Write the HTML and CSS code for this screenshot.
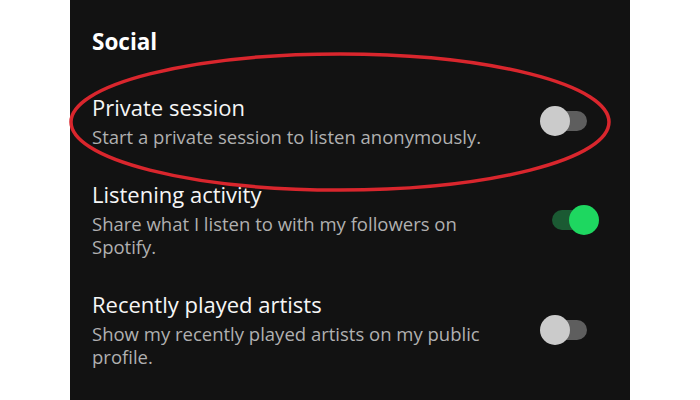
FILE: index.html
```html
<!DOCTYPE html>
<html lang="en">
<head>
<meta charset="utf-8">
<title>Social settings</title>
<link rel="stylesheet" href="styles.css">
</head>
<body>
<div class="stage">
  <section class="panel">
    <h2 class="heading">Social</h2>
    <div class="rows">
      <div class="row">
        <div class="text">
          <div class="title">Private session</div>
          <div class="desc">Start a private session to listen anonymously.</div>
        </div>
        <div class="switch">
          <span class="track"></span>
          <span class="knob"></span>
        </div>
      </div>
      <div class="row">
        <div class="text">
          <div class="title">Listening activity</div>
          <div class="desc">Share what I listen to with my followers on Spotify.</div>
        </div>
        <div class="switch on">
          <span class="track"></span>
          <span class="knob"></span>
        </div>
      </div>
      <div class="row">
        <div class="text">
          <div class="title">Recently played artists</div>
          <div class="desc">Show my recently played artists on my public profile.</div>
        </div>
        <div class="switch">
          <span class="track"></span>
          <span class="knob"></span>
        </div>
      </div>
    </div>
  </section>
  <svg class="annotation" width="700" height="400" viewBox="0 0 700 400" aria-hidden="true">
    <ellipse cx="340" cy="122" rx="269" ry="68" fill="none" stroke="#d9262d" stroke-width="3.5"/>
  </svg>
</div>
</body>
</html>
```
FILE: styles.css
```css
html, body {
  margin: 0;
  padding: 0;
  background: #ffffff;
}

.stage {
  position: relative;
  width: 700px;
  height: 400px;
  overflow: hidden;
}

.panel {
  box-sizing: border-box;
  margin-left: 70px;
  width: 560px;
  height: 400px;
  background: #121212;
  padding: 28px 31px 0 22px;
  font-family: "Open Sans", "Noto Sans", sans-serif;
  color: #ffffff;
}

.heading {
  margin: 0 0 38px;
  font-size: 22.5px;
  line-height: 28px;
  font-weight: 700;
  color: #ffffff;
}

.rows {
  display: flex;
  flex-direction: column;
  gap: 32px;
}

.row {
  display: flex;
  align-items: center;
  justify-content: space-between;
}

.text {
  width: 415px;
}

.title {
  font-size: 22px;
  line-height: 26px;
  color: #f6f6f6;
}

.desc {
  margin-top: 5px;
  font-size: 18.5px;
  line-height: 23.5px;
  color: #b0b0b0;
}

.switch {
  position: relative;
  width: 59px;
  height: 30px;
  flex: none;
}

.switch .track {
  position: absolute;
  left: 12px;
  right: 12px;
  top: 5px;
  height: 20px;
  border-radius: 10px;
  background: #5e5e5e;
}

.switch .knob {
  position: absolute;
  left: 0;
  top: 0;
  width: 30px;
  height: 30px;
  border-radius: 50%;
  background: #cbcbcb;
}

.switch.on .track {
  background: #1b5a33;
}

.switch.on .knob {
  left: auto;
  right: 0;
  background: #1ed760;
}

.annotation {
  position: absolute;
  left: 0;
  top: 0;
  pointer-events: none;
}
```
